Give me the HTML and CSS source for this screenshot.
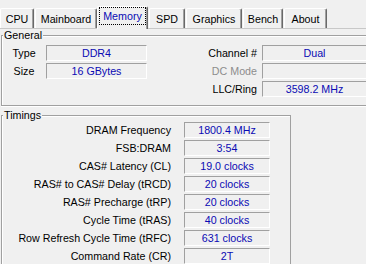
FILE: index.html
```html
<!DOCTYPE html>
<html lang="en">
    <head>
        <meta charset="UTF-8">
        <meta name="viewport" content="width=device-width, initial-scale=1.0">
        <title>CPU-Z Memory</title>
        <link rel="stylesheet" href="styles.css">
    </head>
    <body>
        <div class="window">
            <div class="tabs">
                <div class="tab tab-cpu">CPU</div>
                <div class="tab tab-board">Mainboard</div>
                <div class="tab tab-memory active"><span>Memory</span></div>
                <div class="tab tab-spd">SPD</div>
                <div class="tab tab-graphics">Graphics</div>
                <div class="tab tab-bench">Bench</div>
                <div class="tab tab-about">About</div>
            </div>
            <div class="panel">
                <div class="group general">
                    <div class="legend">General</div>
                    <div class="general-body">
                        <div class="col-left">
                            <div class="row"><span class="lbl">Type</span><span class="val">DDR4</span></div>
                            <div class="row"><span class="lbl">Size</span><span class="val">16 GBytes</span></div>
                        </div>
                        <div class="col-right">
                            <div class="row"><span class="lbl">Channel #</span><span class="val">Dual</span></div>
                            <div class="row"><span class="lbl disabled">DC Mode</span><span class="val"></span></div>
                            <div class="row"><span class="lbl">LLC/Ring</span><span class="val">3598.2 MHz</span></div>
                        </div>
                    </div>
                </div>
                <div class="group timings">
                    <div class="legend">Timings</div>
                    <div class="timing-list">
                        <div class="row"><span class="lbl">DRAM Frequency</span><span class="val">1800.4 MHz</span></div>
                        <div class="row"><span class="lbl">FSB:DRAM</span><span class="val">3:54</span></div>
                        <div class="row"><span class="lbl">CAS# Latency (CL)</span><span class="val">19.0 clocks</span></div>
                        <div class="row"><span class="lbl">RAS# to CAS# Delay (tRCD)</span><span class="val">20 clocks</span></div>
                        <div class="row"><span class="lbl">RAS# Precharge (tRP)</span><span class="val">20 clocks</span></div>
                        <div class="row"><span class="lbl">Cycle Time (tRAS)</span><span class="val">40 clocks</span></div>
                        <div class="row"><span class="lbl">Row Refresh Cycle Time (tRFC)</span><span class="val">631 clocks</span></div>
                        <div class="row"><span class="lbl">Command Rate (CR)</span><span class="val">2T</span></div>
                    </div>
                </div>
            </div>
        </div>
    </body>
</html>
```

FILE: styles.css
```css
html,
body {
    margin: 0;
    height: 264px;
    overflow: hidden;
    background-color: #f0f0f0;
}
body {
    font-family: "Liberation Sans", Arial, sans-serif;
    font-size: 10.7px;
    color: #000;
}
.window {
    width: 366px;
    height: 264px;
}

/* tab strip */
.tabs {
    display: flex;
    align-items: flex-end;
    height: 28px;
    position: relative;
    z-index: 1;
}
.tab {
    box-sizing: border-box;
    height: 20px;
    margin-right: 1px;
    display: flex;
    align-items: center;
    justify-content: center;
    background-color: #f0f0f0;
    border-top: 1px solid #fff;
    border-left: 1px solid #fff;
    border-right: 1px solid #696969;
    box-shadow: inset -1px 0 #a0a0a0;
    border-radius: 2px 2px 0 0;
    line-height: 14px;
}
.tab-cpu { width: 34px; }
.tab-board { width: 62px; margin-right: 0; }
.tab-memory { width: 51px; }
.tab-spd { width: 36px; }
.tab-graphics { width: 56px; }
.tab-bench { width: 40px; }
.tab-about { width: 43px; }
.tab.active {
    height: 23px;
    margin-bottom: -1px;
    align-items: flex-start;
    color: #0a0ab4;
}
.tab.active span {
    box-sizing: border-box;
    display: block;
    width: 47px;
    height: 18px;
    line-height: 16px;
    text-align: center;
    border: 1px dotted #000;
}

.panel {
    border-top: 1px solid #c8c8c8;
}

/* group boxes */
.group {
    box-sizing: border-box;
    border: 1px solid #a0a0a0;
    box-shadow: inset 1px 1px 0 #fff, 0 1px 0 #fff;
    margin-left: 1px;
}
.legend {
    width: fit-content;
    margin: -7px 0 0 1px;
    padding: 0 1px;
    line-height: 13px;
    background-color: #f0f0f0;
}
.row {
    display: flex;
    height: 16px;
    margin-bottom: 2px;
    line-height: 16px;
}
.val {
    box-sizing: border-box;
    height: 16px;
    line-height: 14px;
    text-align: center;
    color: #0a0ab4;
    border-top: 1px solid #a0a0a0;
    border-left: 1px solid #a0a0a0;
    border-bottom: 1px solid #fff;
    border-right: 1px solid #fff;
    white-space: nowrap;
}

.general {
    margin-top: 6px;
    padding-bottom: 6px;
    border-right: none;
}
.general-body {
    display: flex;
    margin-top: 3px;
}
.col-left .lbl {
    width: 44px;
    text-align: center;
}
.col-left .val {
    width: 101px;
}
.col-right {
    margin-left: 10px;
}
.col-right .lbl {
    width: 100px;
    margin-right: 5px;
    text-align: right;
}
.col-right .val {
    width: 104px;
    border-right: none;
}
.lbl.disabled {
    color: #8d8d8d;
}

.timings {
    width: 290px;
    height: 150px;
    margin-top: 9px;
    border-bottom: none;
}
.timing-list .lbl {
    width: 169px;
    margin-right: 13px;
    text-align: right;
    white-space: nowrap;
}
.timing-list .val {
    width: 86px;
}
.timing-list .row:last-child {
    margin-bottom: 0;
}
```
